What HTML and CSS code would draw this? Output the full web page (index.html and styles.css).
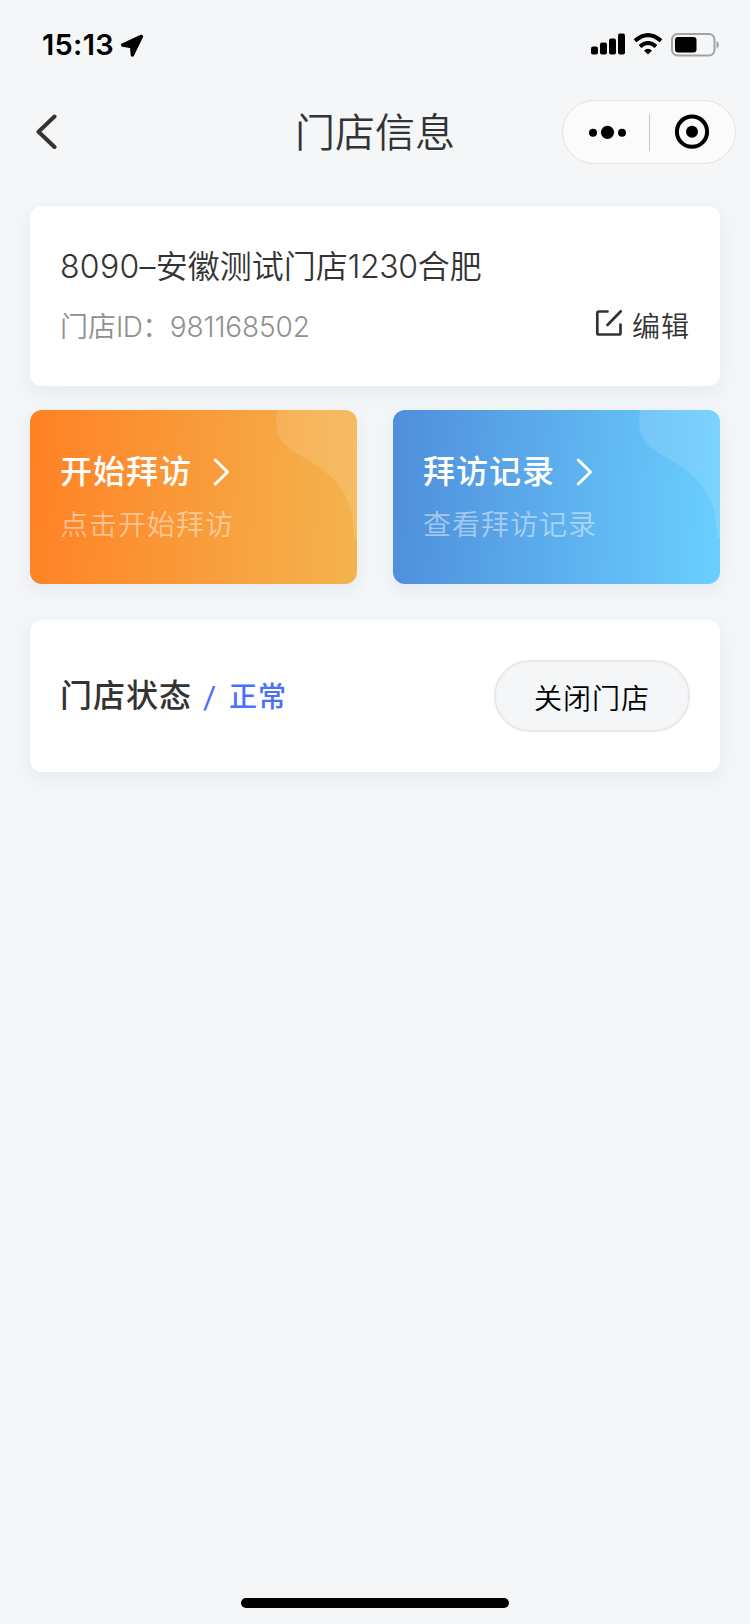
FILE: index.html
```
<!DOCTYPE html>
<html lang="zh-CN">
  <head>
    <meta charset="UTF-8" />
    <title>门店信息</title>
    <link rel="stylesheet" href="styles.css">
  </head>
  <body>
    <div class="page">
      <div class="status-bar">
        <div class="status-left">
          <span class="time">15:13</span>
          <svg class="location" width="24" height="24" viewBox="0 0 24 24">
            <path d="M21.4 2.4 L12.4 21 L11.6 12.6 L2.6 11 Z" stroke="#000" stroke-width="3.4" stroke-linejoin="round" />
          </svg>
        </div>
        <div class="status-right">
          <svg width="35" height="22" viewBox="0 0 35 22">
            <rect x="0" y="13.5" width="7" height="8" rx="2" />
            <rect x="9" y="9.5" width="7" height="12" rx="2" />
            <rect x="18" y="5.5" width="7" height="16" rx="2" />
            <rect x="27" y="0.5" width="7" height="21" rx="2" />
          </svg>
          <svg class="wifi" width="30" height="22" viewBox="0 0 30 22">
            <path d="M2 7.8 Q15 -3.6 28 7.8" fill="none" stroke="#000" stroke-width="4" />
            <path d="M7 13.4 Q15 6.6 23 13.4" fill="none" stroke="#000" stroke-width="4" />
            <path d="M11 17.6 Q15 14 19 17.6 L15 21.6 Z" />
          </svg>
          <svg class="battery" width="49" height="24" viewBox="0 0 49 24">
            <rect x="1" y="1" width="42.5" height="21.5" rx="5.5" fill="none" stroke="#a2a3a5" stroke-width="2" />
            <rect x="4" y="4" width="21.5" height="15.5" rx="3" />
            <path d="M45.5 8 Q48 9.2 48 11.8 Q48 14.4 45.5 15.6 Z" fill="#a2a3a5" />
          </svg>
        </div>
      </div>

      <div class="nav-bar">
        <svg class="back" width="22" height="36" viewBox="0 0 22 36">
          <path d="M18.5 2.5 L2.5 17.8 L18.5 33" />
        </svg>
        <h1 class="title">门店信息</h1>
        <div class="capsule">
          <svg width="40" height="16" viewBox="0 0 40 16">
            <circle cx="5" cy="8.8" r="4" />
            <circle cx="19.5" cy="8.3" r="6.6" />
            <circle cx="34" cy="8.8" r="4" />
          </svg>
          <span class="capsule-line"></span>
          <svg width="36" height="36" viewBox="0 0 36 36">
            <circle cx="18" cy="17.7" r="15.1" fill="none" stroke="#000" stroke-width="4" />
            <circle cx="18" cy="17.7" r="6" />
          </svg>
        </div>
      </div>

      <div class="content">
        <div class="card store">
          <div class="store-name"><span class="name-code">8090–</span>安徽测试门店<span class="name-number">1230</span>合肥</div>
          <div class="store-row">
            <div class="store-id">门店<span class="id-label">ID：</span><span class="id-number">981168502</span></div>
            <div class="edit">
              <svg width="28" height="28" viewBox="0 0 28 28">
                <path d="M12.5 2.5 H3.8 Q2.3 2.5 2.3 4 V24 Q2.3 25.5 3.8 25.5 H24 Q25.5 25.5 25.5 24 V15.5" />
                <path d="M12.5 16 L25.8 2.3" />
              </svg>
              <span>编辑</span>
            </div>
          </div>
        </div>

        <div class="actions">
          <div class="action start">
            <svg class="wave" width="82" height="128" viewBox="0 0 82 128">
              <path d="M2 0 C0 18 0 30 21 43 C49 61 79 72 79 128 H82 V0 Z" />
            </svg>
            <div class="action-title">
              <span>开始拜访</span>
              <svg width="18" height="28" viewBox="0 0 18 28">
                <path d="M2.3 2 L14.5 14 L2.3 26" />
              </svg>
            </div>
            <div class="action-text">点击开始拜访</div>
          </div>
          <div class="action record">
            <svg class="wave" width="82" height="128" viewBox="0 0 82 128">
              <path d="M2 0 C0 18 0 30 21 43 C49 61 79 72 79 128 H82 V0 Z" />
            </svg>
            <div class="action-title">
              <span>拜访记录</span>
              <svg width="18" height="28" viewBox="0 0 18 28">
                <path d="M2.3 2 L14.5 14 L2.3 26" />
              </svg>
            </div>
            <div class="action-text">查看拜访记录</div>
          </div>
        </div>

        <div class="card state">
          <div class="state-label">门店状态</div>
          <div class="state-value">
            <span class="slash">/</span>
            <span>正常</span>
          </div>
          <button class="close-btn">关闭门店</button>
        </div>
      </div>

      <div class="home-bar"></div>
    </div>
  </body>
</html>
```
FILE: styles.css
```
:root {
  --bg-page: #f4f6f8;
  --color-text: #333;
  --color-muted: #909090;
  --color-blue: #4a70fa;
  --radius: 12px;
  --shadow: 0 6px 16px rgba(190, 203, 222, 0.26);
}

* {
  box-sizing: border-box;
}

body {
  margin: 0;
  font-family: Inter, "Noto Sans CJK SC", sans-serif;
  font-weight: 350;
  background: var(--bg-page);
  color: var(--color-text);
}

svg {
  display: block;
  flex: none;
}

.page {
  display: flex;
  flex-direction: column;
  width: 750px;
  height: 1624px;
}

/* Системная строка */
.status-bar {
  display: flex;
  justify-content: space-between;
  height: 88px;
  padding: 33px 30px 0 42px;
}

.status-left,
.status-right {
  display: flex;
  align-items: flex-start;
}

.time {
  font-size: 29px;
  font-weight: 600;
  line-height: 24px;
  letter-spacing: 0.3px;
  color: #000;
}

.location {
  margin: 1px 0 0 6px;
}

.wifi {
  margin-left: 7px;
}

.battery {
  margin-left: 8px;
}

/* Шапка */
.nav-bar {
  display: grid;
  grid-template-columns: 1fr 160px 1fr;
  align-items: center;
  height: 88px;
  padding: 0 14px;
}

.back {
  margin-left: 22px;
}

.back path {
  fill: none;
  stroke: var(--color-text);
  stroke-width: 4;
  stroke-linecap: round;
  stroke-linejoin: round;
}

.title {
  margin: 0;
  font-size: 40px;
  font-weight: 350;
  line-height: 56px;
  padding-top: 2px;
  white-space: nowrap;
}

.capsule {
  display: flex;
  align-items: center;
  justify-self: end;
  width: 174px;
  height: 64px;
  padding: 0 25px;
  border: 1px solid #e3e4e5;
  border-radius: 32px;
  background: #fbfbfb;
}

.capsule-line {
  flex: none;
  width: 1px;
  height: 37px;
  margin: 0 24px 0 21px;
  background: #c8c8c9;
}

/* Карточки */
.content {
  flex: 1;
  padding: 30px 30px 0;
}

.card {
  border-radius: var(--radius);
  background: #fff;
  box-shadow: var(--shadow);
}

.store {
  height: 180px;
  padding: 39px 30px 0;
}

.store-name {
  font-size: 32px;
  line-height: 44px;
}

.name-code {
  letter-spacing: 0.3px;
}

.name-number {
  letter-spacing: -0.4px;
}

.store-row {
  display: flex;
  justify-content: space-between;
  margin-top: 18px;
  font-size: 28px;
  line-height: 40px;
}

.store-id {
  color: var(--color-muted);
}

.id-label {
  letter-spacing: -0.6px;
}

.id-number {
  letter-spacing: -0.1px;
}

.edit {
  display: flex;
  gap: 9px;
  letter-spacing: 1px;
}

.edit svg {
  margin-top: 2px;
}

.edit path {
  fill: none;
  stroke: var(--color-text);
  stroke-width: 2.7;
  stroke-linecap: round;
}

/* Кнопки посещений */
.actions {
  display: flex;
  gap: 36px;
  margin: 24px 0 36px;
}

.action {
  position: relative;
  flex: 1;
  height: 174px;
  padding: 40px 30px 0;
  border-radius: var(--radius);
  overflow: hidden;
  box-shadow: var(--shadow);
  color: #fff;
  letter-spacing: 1px;
}

.start {
  background: linear-gradient(93deg, #ff8125, #f4b44e);
}

.record {
  background: linear-gradient(93deg, #4f8edb, #6acfff);
}

.wave {
  position: absolute;
  top: 0;
  right: 0;
  fill: rgba(255, 255, 255, 0.12);
}

.action-title {
  display: flex;
  align-items: center;
  gap: 21px;
  font-size: 32px;
  font-weight: 500;
  line-height: 44px;
}

.action-title path {
  fill: none;
  stroke: #fff;
  stroke-width: 3;
  stroke-linecap: round;
  stroke-linejoin: round;
}

.action-text {
  margin-top: 11px;
  font-size: 28px;
  line-height: 40px;
  color: rgba(255, 255, 255, 0.48);
}

/* Статус магазина */
.state {
  display: flex;
  align-items: center;
  height: 152px;
  padding: 0 30px;
  letter-spacing: 1px;
}

.state-label {
  font-size: 32px;
  font-weight: 500;
  line-height: 44px;
}

.state-value {
  display: flex;
  align-items: center;
  margin-left: 11px;
  padding-top: 2px;
  font-size: 28px;
  font-weight: 500;
  line-height: 40px;
  color: var(--color-blue);
}

.slash {
  width: 26px;
  font-family: Roboto, sans-serif;
  font-size: 32px;
  font-weight: 400;
}

.close-btn {
  width: 196px;
  height: 72px;
  margin-left: auto;
  padding: 2px 0 0;
  border: 2px solid #e8e8e8;
  border-radius: 36px;
  background: var(--bg-page);
  color: #000;
  font: inherit;
  font-size: 28px;
  letter-spacing: 1px;
}

.home-bar {
  width: 268px;
  height: 10px;
  margin: 0 auto 16px;
  border-radius: 5px;
  background: #000;
}
```
